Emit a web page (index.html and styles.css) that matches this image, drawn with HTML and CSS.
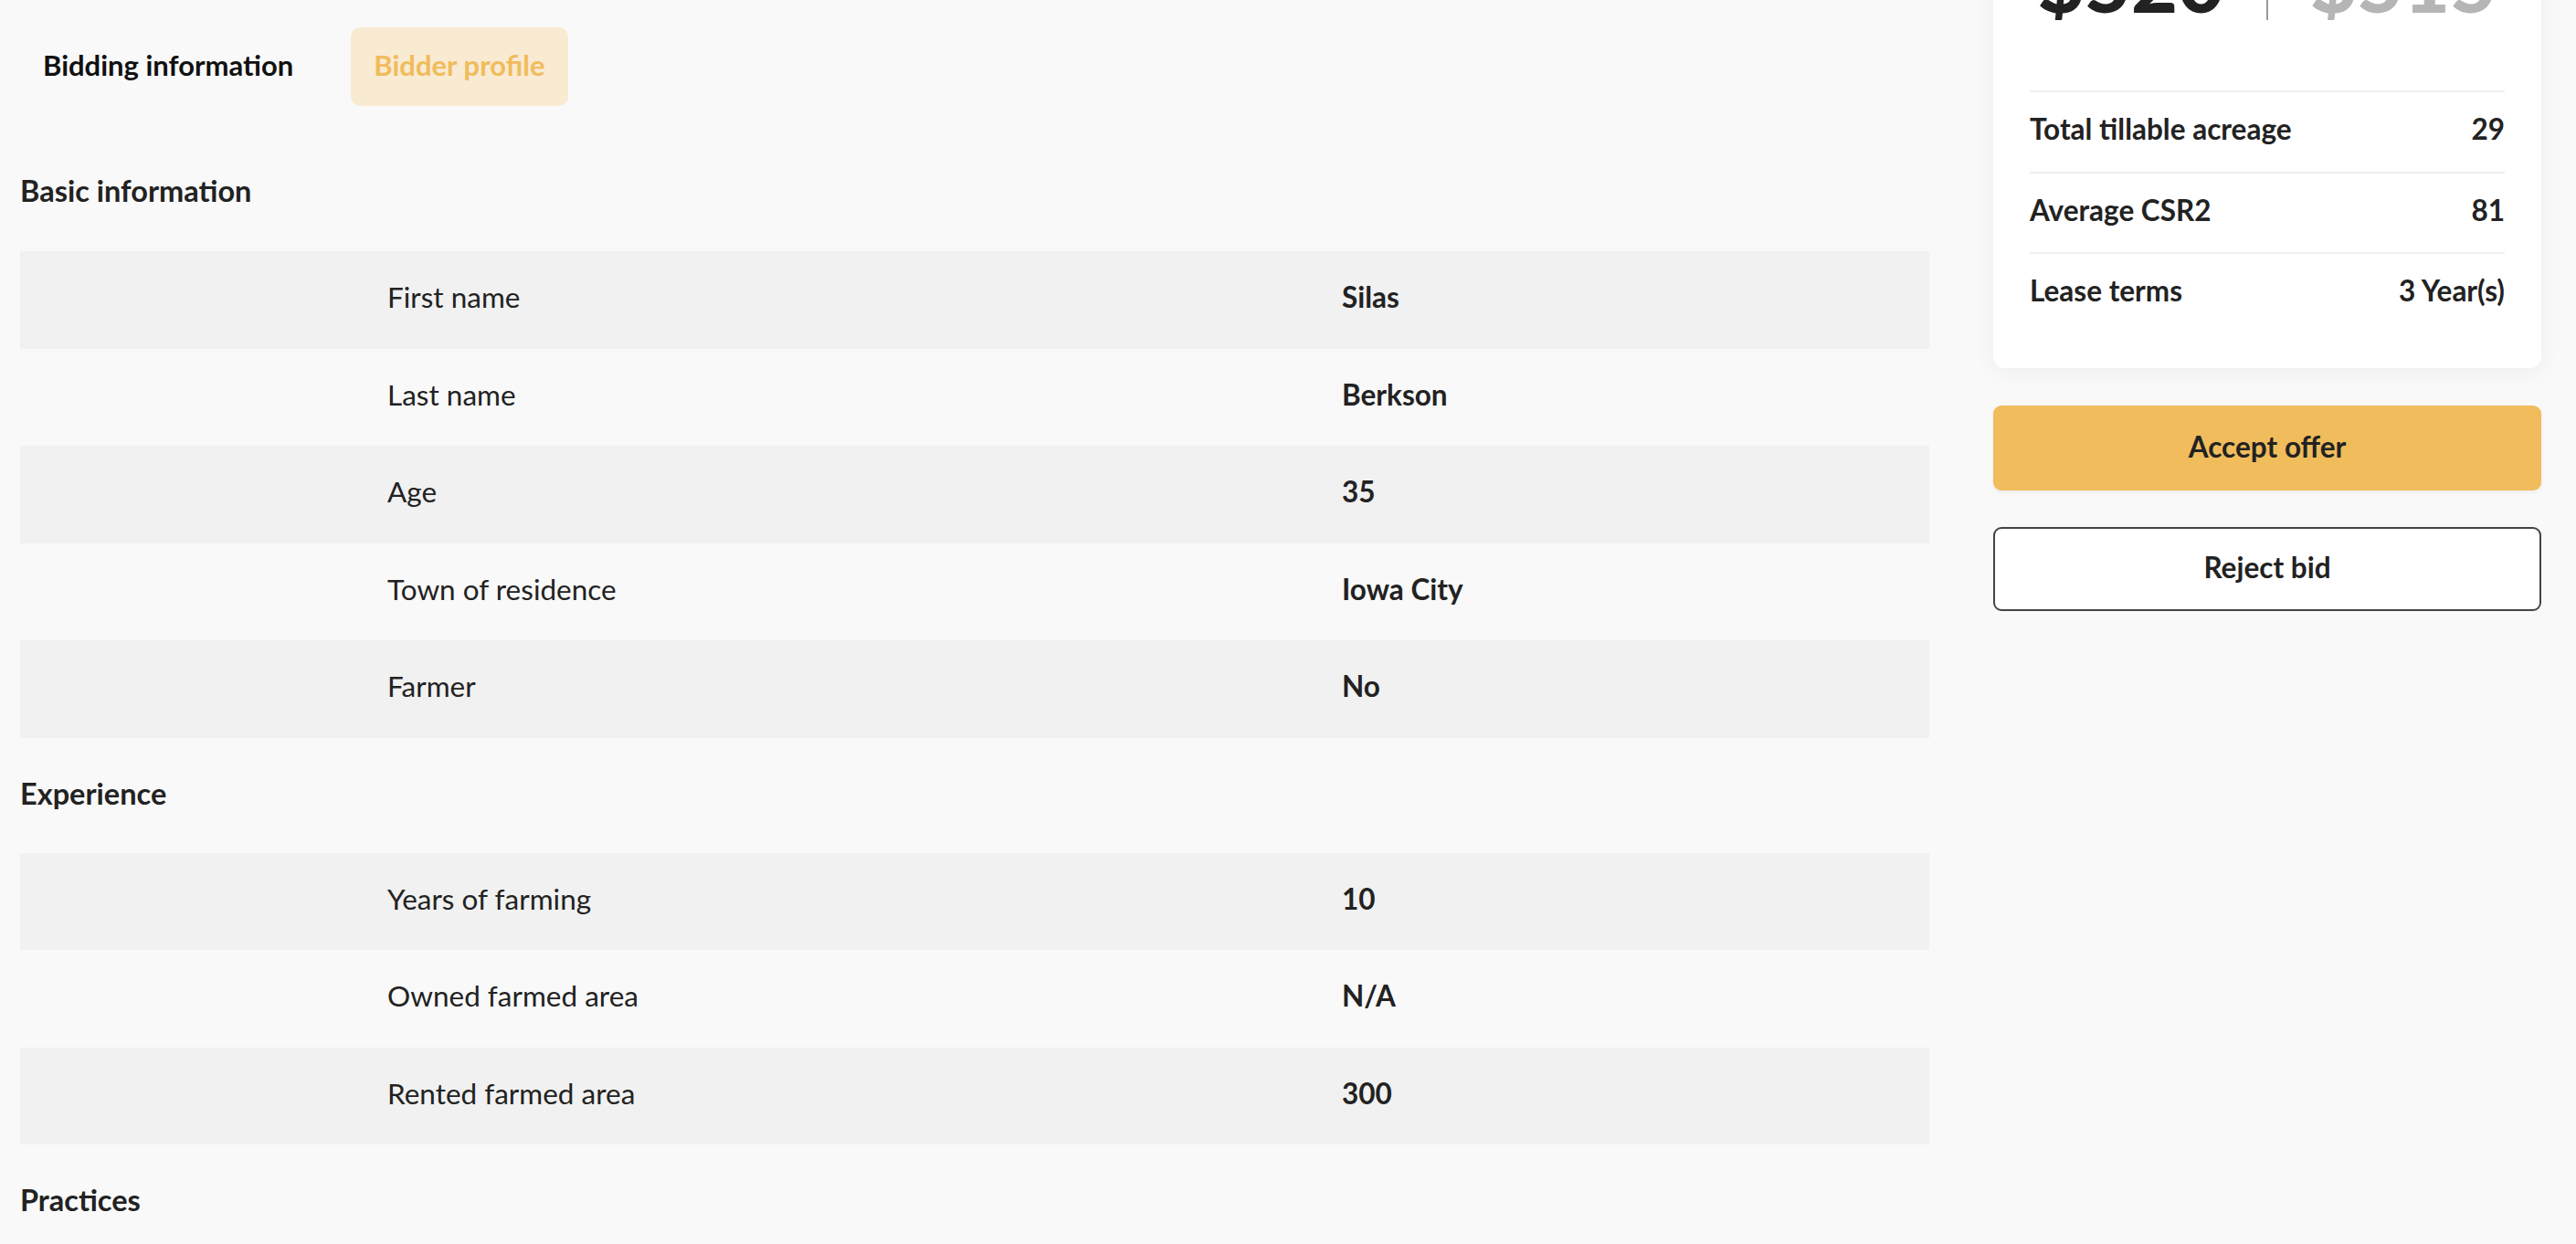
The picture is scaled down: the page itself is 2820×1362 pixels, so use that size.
FILE: index.html
```html
<!DOCTYPE html>
<html lang="en">
<head>
<meta charset="utf-8">
<title>Bidder profile</title>
<link rel="stylesheet" href="styles.css">
</head>
<body>
<div class="page">
  <main class="main">
    <nav class="tabs">
      <button class="tab">Bidding information</button>
      <button class="tab tab-active">Bidder profile</button>
    </nav>

    <h2 class="section-title first">Basic information</h2>
    <div class="table">
      <div class="row"><span></span><span class="label">First name</span><span class="value">Silas</span></div>
      <div class="row"><span></span><span class="label">Last name</span><span class="value">Berkson</span></div>
      <div class="row"><span></span><span class="label">Age</span><span class="value">35</span></div>
      <div class="row"><span></span><span class="label">Town of residence</span><span class="value">Iowa City</span></div>
      <div class="row"><span></span><span class="label">Farmer</span><span class="value">No</span></div>
    </div>

    <h2 class="section-title">Experience</h2>
    <div class="table">
      <div class="row"><span></span><span class="label">Years of farming</span><span class="value">10</span></div>
      <div class="row"><span></span><span class="label">Owned farmed area</span><span class="value">N/A</span></div>
      <div class="row"><span></span><span class="label">Rented farmed area</span><span class="value">300</span></div>
    </div>

    <h2 class="section-title">Practices</h2>
  </main>

  <aside class="side">
    <div class="card">
      <div class="prices">
        <span class="price">$520</span>
        <span class="price-sep"></span>
        <span class="price price-old">$515</span>
      </div>
      <div class="stats">
        <div class="stat"><span>Total tillable acreage</span><span class="stat-value">29</span></div>
        <div class="stat"><span>Average CSR2</span><span class="stat-value">81</span></div>
        <div class="stat"><span>Lease terms</span><span class="stat-value">3 Year(s)</span></div>
      </div>
    </div>
    <button class="btn btn-accept">Accept offer</button>
    <button class="btn btn-reject">Reject bid</button>
  </aside>
</div>
</body>
</html>
```

FILE: styles.css
```css
* { box-sizing: border-box; }

html, body {
  margin: 0;
  padding: 0;
  background: #f9f9f9;
  color: #222222;
  font-family: "Lato", "Liberation Sans", sans-serif;
}

.page {
  display: flex;
  gap: 70px;
  padding: 0 38px 0 22px;
  height: 1362px;
  overflow: hidden;
}

.main {
  flex: 0 0 2090px;
  min-width: 0;
  display: flex;
  flex-direction: column;
  padding-top: 30px;
}

.tabs {
  display: flex;
  gap: 38px;
}

.tab {
  font-family: inherit;
  font-size: 31px;
  font-weight: 700;
  color: #111111;
  background: transparent;
  border: 0;
  border-radius: 10px;
  height: 86px;
  padding: 0 25px 4px;
  cursor: pointer;
}

.tab-active {
  background: #f9ead2;
  color: #f0bc5c;
}

.section-title {
  margin: 43px 0 47px;
  font-size: 32.5px;
  line-height: 36px;
  font-weight: 700;
  color: #222222;
}

.section-title.first {
  margin-top: 75px;
  margin-bottom: 48px;
}

.table {
  display: flex;
  flex-direction: column;
}

.row {
  display: grid;
  grid-template-columns: 402px 1045px 1fr;
  align-items: center;
  height: 106.5px;
  padding-bottom: 6px;
  font-size: 31.5px;
}

.row:nth-child(odd) {
  background: #f1f1f1;
}

.label {
  font-weight: 400;
  color: #222222;
}

.value {
  font-weight: 700;
  color: #222222;
}

.side {
  flex: 0 0 600px;
  width: 600px;
  min-width: 0;
  display: flex;
  flex-direction: column;
  gap: 40px;
}

.card {
  background: #ffffff;
  border-radius: 12px;
  box-shadow: 0 4px 24px rgba(0, 0, 0, 0.05);
  padding: 0 40px 38px;
  margin-top: -70px;
  margin-bottom: 1px;
  min-width: 0;
}

.prices {
  display: flex;
  justify-content: center;
  align-items: flex-end;
  gap: 46px;
  height: 92px;
  overflow: hidden;
}

.price {
  font-size: 88px;
  font-weight: 900;
  line-height: 1;
  color: #222222;
  margin-bottom: -2px;
}

.price-old {
  color: #b5b5b5;
}

.price-sep {
  width: 2px;
  height: 70px;
  background: #9a9a9a;
  align-self: flex-end;
}

.stats {
  margin-top: 77px;
}

.stat {
  display: flex;
  justify-content: space-between;
  align-items: center;
  height: 88.5px;
  padding-bottom: 6px;
  border-top: 2px solid #efefef;
  font-size: 31.5px;
  font-weight: 700;
  color: #222222;
}

.btn {
  font-family: inherit;
  font-size: 31.5px;
  font-weight: 700;
  color: #222222;
  border-radius: 9px;
  padding-bottom: 4px;
  cursor: pointer;
}

.btn-accept {
  height: 93px;
  background: #f0bc5c;
  border: 0;
  box-shadow: 0 2px 4px rgba(0, 0, 0, 0.06);
}

.btn-reject {
  height: 92px;
  background: #ffffff;
  border: 2px solid #444444;
}
```
